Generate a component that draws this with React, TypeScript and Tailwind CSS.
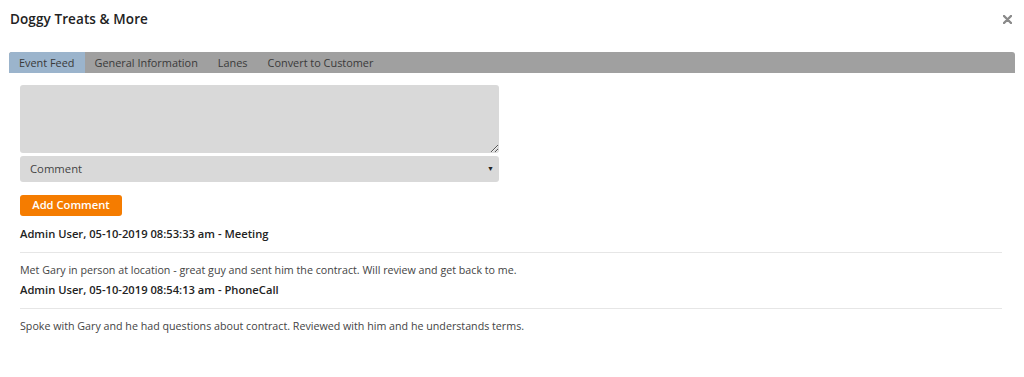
import { useState } from "react";

type FeedEvent = {
  author: string;
  stamp: string;
  kind: string;
  note: string;
};

const events: FeedEvent[] = [
  {
    author: "Admin User",
    stamp: "05-10-2019 08:53:33 am",
    kind: "Meeting",
    note: "Met Gary in person at location - great guy and sent him the contract. Will review and get back to me.",
  },
  {
    author: "Admin User",
    stamp: "05-10-2019 08:54:13 am",
    kind: "PhoneCall",
    note: "Spoke with Gary and he had questions about contract. Reviewed with him and he understands terms.",
  },
];

const tabs = ["Event Feed", "General Information", "Lanes", "Convert to Customer"];

export default function App() {
  const [active, setActive] = useState(0);

  return (
    <div className="w-[1024px] h-[377px] bg-white text-[#333] font-['Open_Sans',sans-serif] overflow-hidden">
      {/* header */}
      <div className="flex items-center justify-between h-[38px] pl-[10px] pr-[12px]">
        <h1 className="text-[13.5px] font-semibold text-[#222] tracking-[0.1px]">Doggy Treats &amp; More</h1>
        <button className="text-[#888] leading-none">
          <svg width="9" height="9" viewBox="0 0 9 9">
            <path d="M1 1 L8 8 M8 1 L1 8" stroke="#8a8a8a" strokeWidth="2.4" strokeLinecap="round" />
          </svg>
        </button>
      </div>

      {/* tabs */}
      <div className="mx-[9px] mt-[14px] h-[21px] flex bg-[#a0a0a0] rounded-t-[3px] overflow-hidden">
        {tabs.map((t, i) => (
          <button
            key={t}
            onClick={() => setActive(i)}
            className={`px-[10px] text-[10.9px] text-[#3a3a3a] leading-[20px] ${
              i === active ? "bg-[#9bb4cc]" : ""
            }`}
          >
            {t}
          </button>
        ))}
      </div>

      {/* composer */}
      <div className="px-[20px] pt-[12px]">
        <div className="w-[479px] flex flex-col gap-[3px]">
          <textarea className="h-[68px] bg-[#d9d9d9] rounded-[3px] resize-y outline-none" />
          <div className="h-[26px] bg-[#d9d9d9] rounded-[3px] flex items-center justify-between pl-[10px] pr-[5px]">
            <span className="text-[11.3px] text-[#444]">Comment</span>
            <span className="text-[7px] text-[#222]">▼</span>
          </div>
        </div>
        <button className="mt-[13px] h-[21px] w-[102px] bg-[#f57c00] text-white text-[11.2px] font-semibold rounded-[3px]">
          Add Comment
        </button>

        {/* feed */}
        <div className="mr-[2px] mt-[8px]">
          {events.map((e, i) => (
            <div key={i}>
              <div className="text-[11.2px] font-semibold text-[#222] h-[20px] leading-[20px]">
                {e.author}, {e.stamp} - {e.kind}
              </div>
              <hr className="border-[#e6e6e6] mt-[8px] mb-[8px]" />
              <p className="text-[10.7px] text-[#444] leading-[18px] mb-[1px]">{e.note}</p>
            </div>
          ))}
        </div>
      </div>
    </div>
  );
}
